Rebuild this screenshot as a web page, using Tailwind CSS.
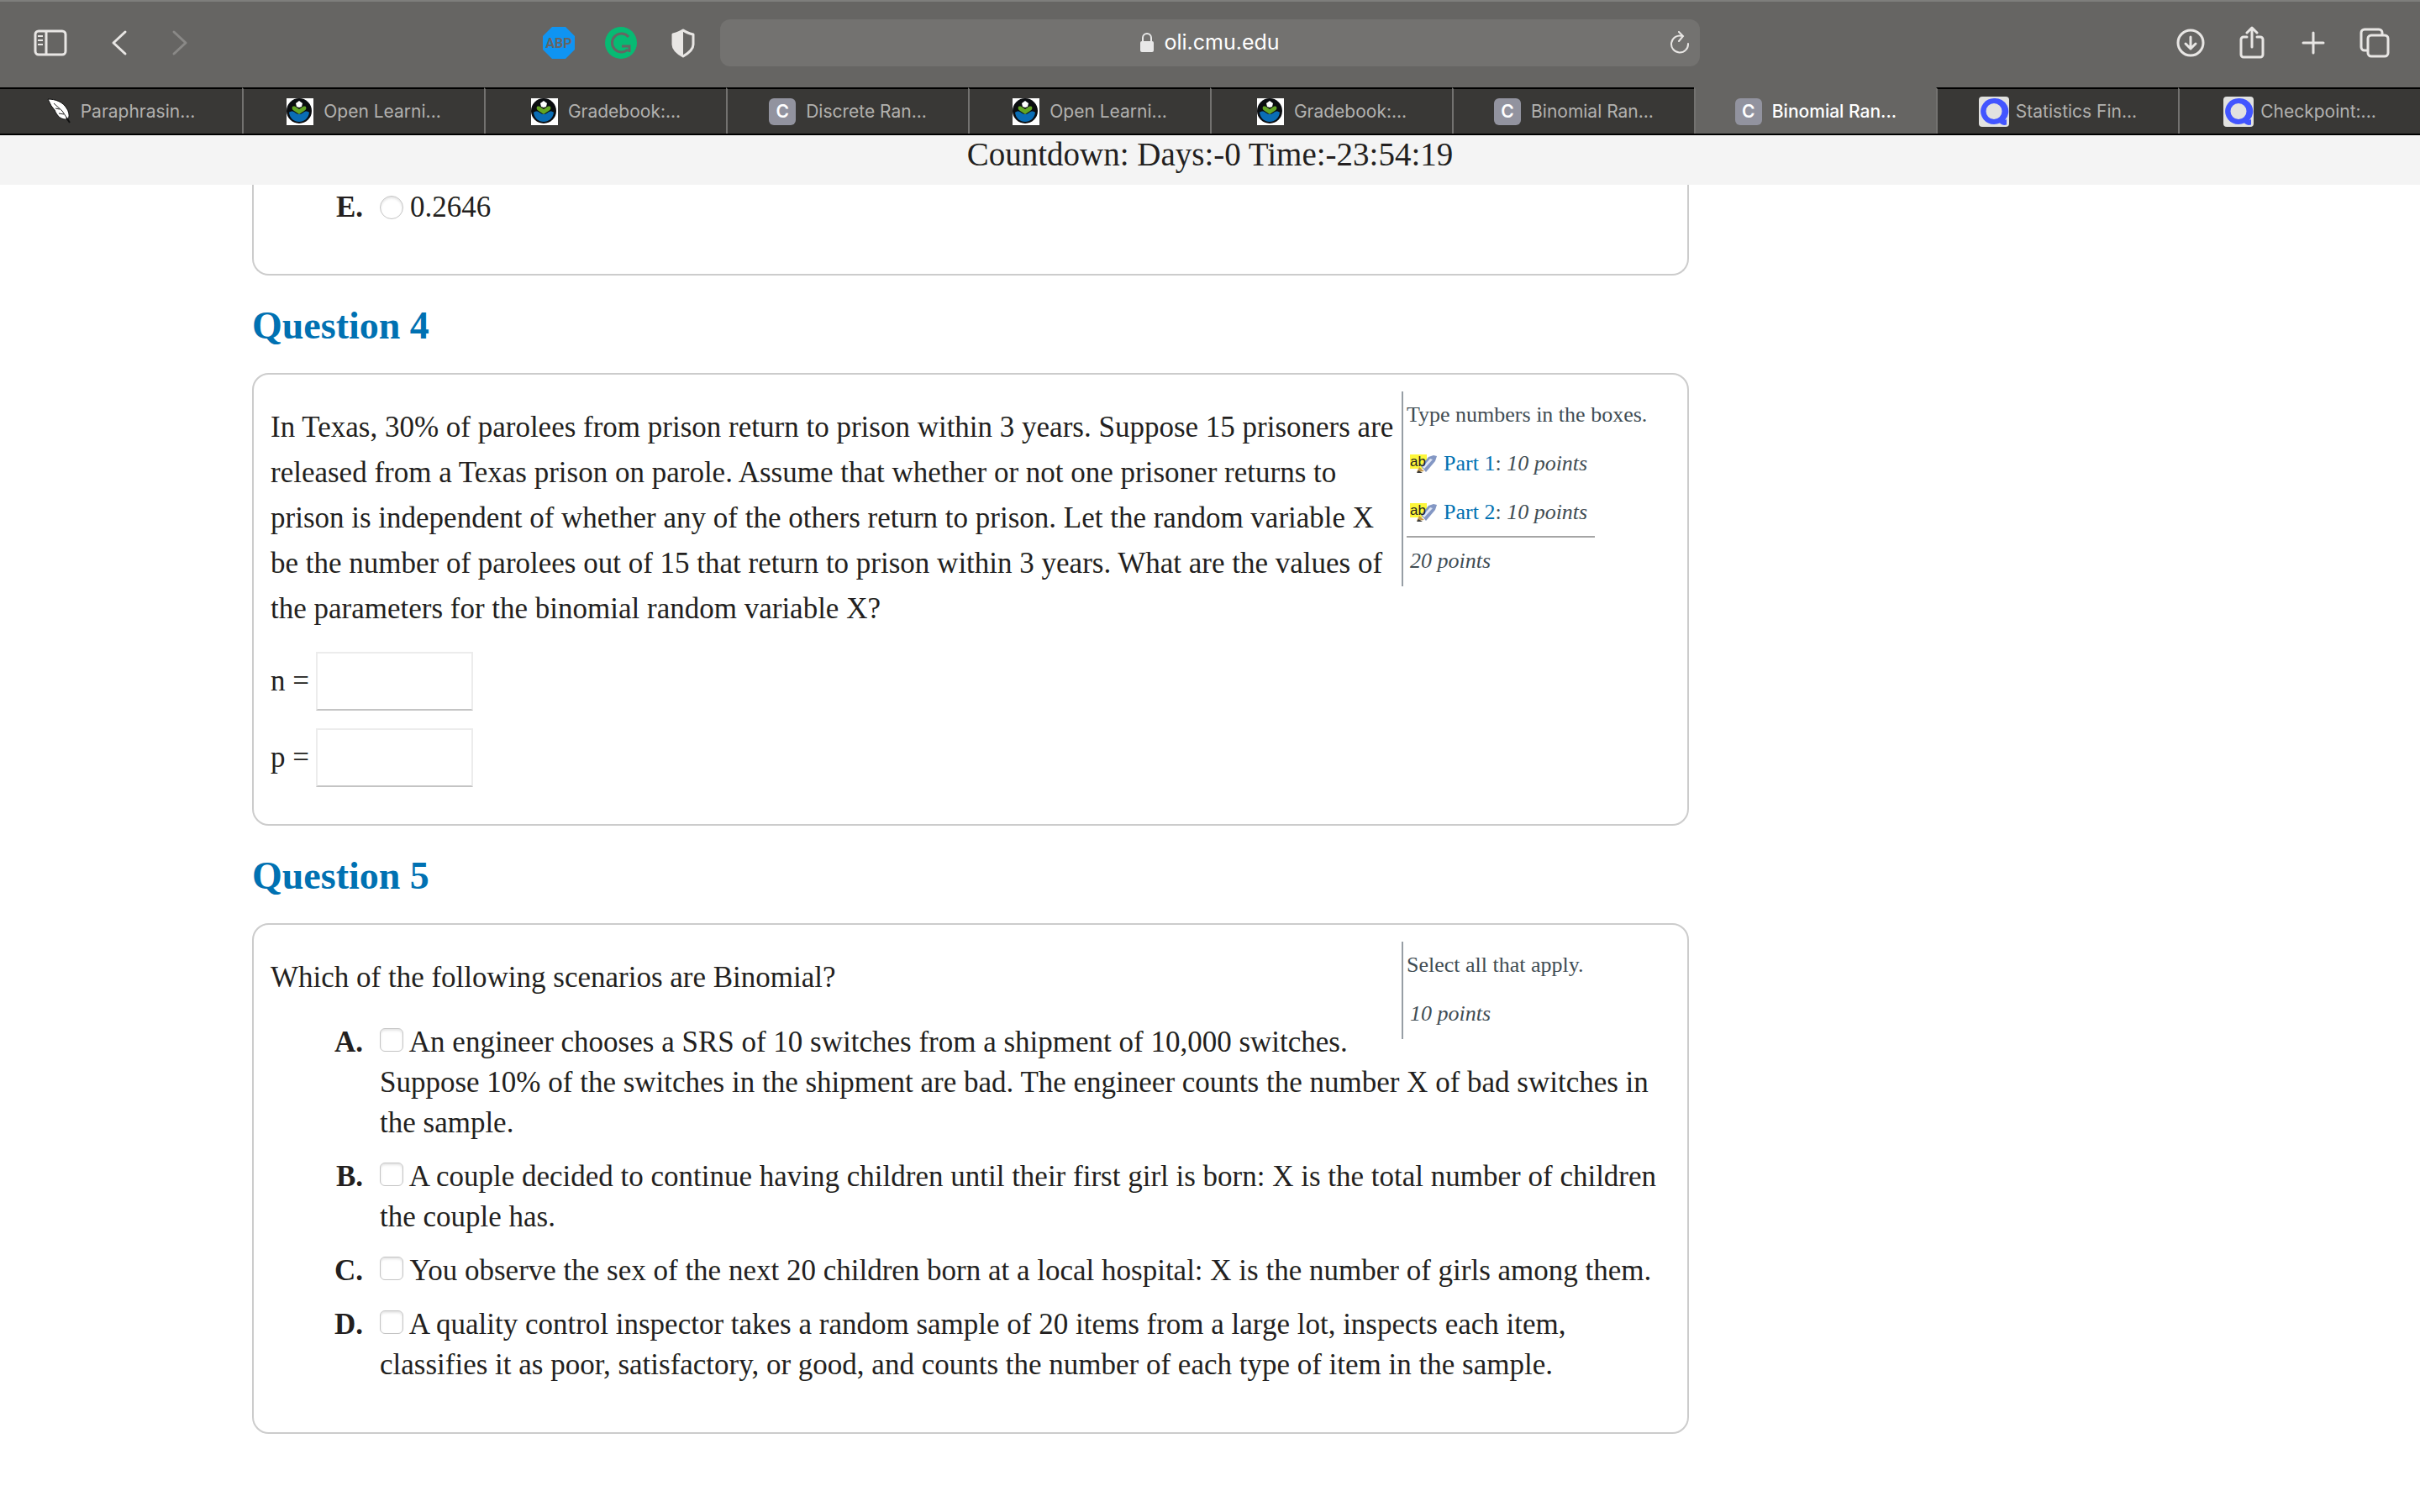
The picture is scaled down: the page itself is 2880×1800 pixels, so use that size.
<!DOCTYPE html>
<html lang="en">

<head>
  <meta charset="UTF-8">
  <meta name="viewport" content="width=device-width, initial-scale=1.0">
  <script src="https://cdn.jsdelivr.net/npm/@tailwindcss/browser@4"></script>
  <title>Binomial Random Variables</title>
</head>

<body class="bg-white min-h-screen overflow-x-hidden text-[#231f20] font-['Liberation_Serif',serif]">

  <!-- icons that are used more than once -->
  <svg class="hidden">
    <symbol id="oli" viewBox="0 0 32 32">
      <path fill="#fff" d="M0 0h32v32H0z" />
      <circle cx="15" cy="15" r="15" fill="#0b0d10" />
      <path fill="#0a6db5" d="M3 17c2-2 5-2 7 0 2 1 3 2 5 2s3-1 5-2c2-2 5-2 7 0-1 7-6 11-12 11S4 24 3 17z" />
      <path fill="#63a524" d="M7 10c2-1 4 0 5 1l3 2 3-2c1-1 3-2 5-1 1 2 0 4-2 5l-6 4-6-4c-2-1-3-3-2-5z" />
      <path fill="#fff" d="m15 3 4 3-1 4-3 1-3-1-1-4z" />
    </symbol>
    <symbol id="quill" viewBox="0 0 36 36">
      <rect width="36" height="36" rx="4" fill="#e2e2e0" />
      <path fill="#4255ff" fill-rule="evenodd" d="M18 2a16 15.500 0 1 0 7 29.500c2 2 5 3 8 2V27l-2 1A16 15.500 0 0 0 18 2zm0 6a9.500 9.500 0 1 1 0 19 9.500 9.500 0 0 1 0-19z" />
    </symbol>
    <symbol id="marker" viewBox="0 0 32 22">
      <path fill="#fdf63a" d="M0 0h20v17H0z" />
      <path fill="#c79a4a" d="m8 21 3-6 6 5z" />
      <path fill="#8397c4" d="m13 14 9-11 6-2 4 1-2 6-11 13z" />
      <path fill="#dfe6f6" d="m15 15 9-10 3 1-10 11z" />
      <path fill="#3a3a3a" d="m8 22 2-3 5 3z" />
      <text x="0" y="14" font-size="17" font-family="Liberation Sans, sans-serif" fill="#222">ab</text>
    </symbol>
  </svg>

  <header class="font-[Inter,sans-serif]">
    <div class="h-26 bg-[#666563] border-t-2 border-[#7e7e7c] flex items-center text-[#e8e6e4] px-9 pb-1">
      <div class="flex-1 flex items-center">
        <button aria-label="Sidebar" class="w-11 ml-1">
          <svg class="w-10 h-8" viewBox="0 0 40 32" fill="none" stroke="currentColor" stroke-width="3">
            <rect x="2" y="2" width="36" height="28" rx="4" />
            <path d="M15 2v28" />
            <path d="M5 8h6M5 13h6M5 18h6" stroke-width="2" />
          </svg>
        </button>
        <button aria-label="Back" class="ml-12">
          <svg class="w-5 h-8" viewBox="0 0 20 32" fill="none" stroke="currentColor" stroke-width="3" stroke-linecap="round" stroke-linejoin="round">
            <path d="M17 3 3 16l14 13" />
          </svg>
        </button>
        <button aria-label="Forward" class="ml-13 text-[#8a8987]">
          <svg class="w-5 h-8" viewBox="0 0 20 32" fill="none" stroke="currentColor" stroke-width="3" stroke-linecap="round" stroke-linejoin="round">
            <path d="m3 3 14 13L3 29" />
          </svg>
        </button>
        <div class="ml-auto flex items-center gap-[34px] mr-6">
          <button aria-label="Adblock Plus">
            <svg class="w-10 h-10" viewBox="0 0 40 40">
              <path fill="#0f94f2" d="M12 1h16l11 11v16L28 39H12L1 28V12z" />
              <text x="20" y="26" text-anchor="middle" font-size="16" font-family="Roboto, sans-serif" font-weight="700" fill="#666563">ABP</text>
            </svg>
          </button>
          <button aria-label="Grammarly">
            <svg class="w-10 h-10" viewBox="0 0 40 40">
              <circle cx="20" cy="20" r="19" fill="#07ba73" />
              <path d="M29 13a11 11 0 1 0-1 15M21 24h9v7" fill="none" stroke="#666563" stroke-width="3" />
            </svg>
          </button>
          <button aria-label="Privacy report">
            <svg class="w-10 h-9" viewBox="0 0 40 36">
              <path fill="none" stroke="currentColor" stroke-width="3" stroke-linejoin="round" d="M20 3c4 3 8 4 12 5v12c0 6-5 10-12 14C13 30 8 26 8 20V8c4-1 8-2 12-5z" />
              <path fill="currentColor" d="M20 3v31C13 30 8 26 8 20V8c4-1 8-2 12-5z" />
            </svg>
          </button>
        </div>
      </div>
      <div class="w-[1166px] h-14 rounded-xl bg-[#737270] flex items-center px-3">
        <div class="flex-1 flex items-center justify-center gap-3 text-[25px] text-white pl-6">
          <svg class="w-4 h-6" viewBox="0 0 16 24">
            <rect y="10" width="16" height="13" rx="2" fill="#e8e8e8" />
            <path d="M3 11V6a5 5 0 0 1 10 0v5" fill="none" stroke="#e8e8e8" stroke-width="2" />
          </svg>
          <span>oli.cmu.edu</span>
        </div>
        <button aria-label="Reload">
          <svg class="w-6 h-7" viewBox="0 0 24 28" fill="none" stroke="currentColor" stroke-width="2" stroke-linecap="round">
            <path d="M15 6a10 10 0 1 0 7 9M11 1l5 5-5 6" />
          </svg>
        </button>
      </div>
      <div class="flex-1 flex items-center justify-end gap-[37px]">
        <button aria-label="Downloads">
          <svg class="w-9 h-9" viewBox="0 0 36 36" fill="none" stroke="currentColor" stroke-width="3" stroke-linecap="round" stroke-linejoin="round">
            <circle cx="18" cy="18" r="15" />
            <path d="M18 11v14M12 19l6 6 6-6" />
          </svg>
        </button>
        <button aria-label="Share">
          <svg class="w-9 h-10" viewBox="0 0 36 40" fill="none" stroke="currentColor" stroke-width="3" stroke-linecap="round" stroke-linejoin="round">
            <path d="M12 13H8a3 3 0 0 0-3 3v18a3 3 0 0 0 3 3h20a3 3 0 0 0 3-3V16a3 3 0 0 0-3-3h-4M18 25V3M12 8l6-6 6 6" />
          </svg>
        </button>
        <button aria-label="New tab">
          <svg class="w-9 h-7" viewBox="0 0 36 28" fill="none" stroke="currentColor" stroke-width="3" stroke-linecap="round">
            <path d="M18 2v24M6 14h24" />
          </svg>
        </button>
        <button aria-label="Tab overview">
          <svg class="w-9 h-9" viewBox="0 0 36 36" fill="none" stroke="currentColor" stroke-width="3">
            <rect x="10" y="9" width="24" height="25" rx="4" />
            <path d="M10 27H6a4 4 0 0 1-4-4V6a4 4 0 0 1 4-4h17a4 4 0 0 1 4 4v3" />
          </svg>
        </button>
      </div>
    </div>

    <!-- tabs -->
    <nav class="h-[57px] bg-[#393836] border-b-2 border-black grid grid-cols-10 text-[21px] text-[#b2b1af]">
      <a href="#" class="border-t-2 border-t-black flex items-center justify-center gap-2">
        <svg class="w-8 h-8" viewBox="0 0 32 32">
          <path fill="#fff" stroke="#111" d="M1 1c9 0 18 3 23 12 2 4 3 8 1 12-9 1-13-4-16-11L5 9z" />
          <path fill="none" stroke="#222" d="m8 6 10 9 6 9M10 12l5 1M14 18l6 1" />
          <path fill="none" stroke="#111" stroke-width="2" d="m23 23 4 6" />
        </svg>
        Paraphrasin...
      </a>
      <a href="#" class="border-t-2 border-t-black border-l-2 border-l-[#737270] flex items-center justify-center gap-3">
        <svg class="w-8 h-8"><use href="#oli" /></svg>
        Open Learni...
      </a>
      <a href="#" class="border-t-2 border-t-black border-l-2 border-l-[#737270] flex items-center justify-center gap-3">
        <svg class="w-8 h-8"><use href="#oli" /></svg>
        Gradebook:...
      </a>
      <a href="#" class="border-t-2 border-t-black border-l-2 border-l-[#737270] flex items-center justify-center gap-3">
        <span class="w-8 h-8 rounded-md bg-[#92939f] text-white font-semibold flex items-center justify-center">C</span>
        Discrete Ran...
      </a>
      <a href="#" class="border-t-2 border-t-black border-l-2 border-l-[#737270] flex items-center justify-center gap-3">
        <svg class="w-8 h-8"><use href="#oli" /></svg>
        Open Learni...
      </a>
      <a href="#" class="border-t-2 border-t-black border-l-2 border-l-[#737270] flex items-center justify-center gap-3">
        <svg class="w-8 h-8"><use href="#oli" /></svg>
        Gradebook:...
      </a>
      <a href="#" class="border-t-2 border-t-black border-l-2 border-l-[#737270] flex items-center justify-center gap-3">
        <span class="w-8 h-8 rounded-md bg-[#92939f] text-white font-semibold flex items-center justify-center">C</span>
        Binomial Ran...
      </a>
      <a href="#" class="bg-[#666563] border-t-2 border-t-[#666563] border-l-2 border-l-[#737270] text-white font-medium flex items-center justify-center gap-3">
        <span class="w-8 h-8 rounded-md bg-[#92939f] text-white font-semibold flex items-center justify-center">C</span>
        Binomial Ran...
      </a>
      <a href="#" class="border-t-2 border-t-black border-l-2 border-l-[#737270] flex items-center justify-center gap-2">
        <svg class="w-9 h-9"><use href="#quill" /></svg>
        Statistics Fin...
      </a>
      <a href="#" class="border-t-2 border-t-black border-l-2 border-l-[#737270] flex items-center justify-center gap-2">
        <svg class="w-9 h-9"><use href="#quill" /></svg>
        Checkpoint:...
      </a>
    </nav>
  </header>

  <div class="h-[59px] bg-[#f4f4f4] text-center text-[39px] leading-[46px]">Countdown: Days:-0 Time:-23:54:19</div>

  <main class="ml-[300px] w-[1710px] max-w-full text-[35px] leading-12">
    <section class="border-2 border-t-0 border-[#cccccc] rounded-b-[20px] px-5 pt-[3px] pb-[55px]">
      <div class="flex">
        <span class="w-[110px] shrink-0 text-right font-bold">E.</span>
        <div class="ml-5 flex items-center">
          <input type="radio" id="q3e" name="q3" class="appearance-none w-7 h-7 rounded-full border border-[#c4c4c4] shadow-[inset_0_2px_3px_#e4e4e4]">
          <label for="q3e" class="ml-2">0.2646</label>
        </div>
      </div>
    </section>

    <h2 class="mt-9 text-[46px] leading-12 text-[#0071b2] font-bold">Question 4</h2>
    <section class="mt-8 border-2 border-[#cccccc] rounded-[20px] p-5 pb-11">
      <div class="flex items-start">
        <p class="flex-1 pt-4 leading-[54px] whitespace-nowrap">
          In Texas, 30% of parolees from prison return to prison within 3 years. Suppose 15 prisoners are<br>
          released from a Texas prison on parole. Assume that whether or not one prisoner returns to<br>
          prison is independent of whether any of the others return to prison. Let the random variable X<br>
          be the number of parolees out of 15 that return to prison within 3 years. What are the values of<br>
          the parameters for the binomial random variable X?
        </p>
        <aside class="w-[320px] shrink-0 h-[232px] border-l-2 border-[#979ea5] pl-1 pt-2 text-[26px] leading-10 text-[#414d54]">
          <p>Type numbers in the boxes.</p>
          <div class="mt-[18px] pl-1 flex items-center gap-2">
            <svg class="w-8 h-6"><use href="#marker" /></svg>
            <p><a href="#" class="text-[#0071b2]">Part 1</a>: <i>10 points</i></p>
          </div>
          <div class="mt-[18px] pl-1 flex items-center gap-2">
            <svg class="w-8 h-6"><use href="#marker" /></svg>
            <p><a href="#" class="text-[#0071b2]">Part 2</a>: <i>10 points</i></p>
          </div>
          <hr class="mt-2 w-56 border-t-2 border-[#a5a5a5]">
          <p class="mt-2 pl-1 italic">20 points</p>
        </aside>
      </div>
      <div class="mt-6 flex items-center">
        <label for="n" class="w-[54px]">n =</label>
        <input type="text" id="n" class="w-[187px] h-[70px] px-3 border-2 border-[#ececec] border-b-[#c4c4c4]">
      </div>
      <div class="mt-[21px] flex items-center">
        <label for="p" class="w-[54px]">p =</label>
        <input type="text" id="p" class="w-[187px] h-[70px] px-3 border-2 border-[#ececec] border-b-[#c4c4c4]">
      </div>
    </section>

    <h2 class="mt-9 text-[46px] leading-12 text-[#0071b2] font-bold">Question 5</h2>
    <section class="mt-8 border-2 border-[#cccccc] rounded-[20px] p-5 pb-14">
      <div class="flex items-start">
        <p class="flex-1 pt-4 leading-[54px]">Which of the following scenarios are Binomial?</p>
        <aside class="w-[320px] shrink-0 h-29 -mb-5 border-l-2 border-[#979ea5] pl-1 pt-2 text-[26px] leading-10 text-[#414d54]">
          <p>Select all that apply.</p>
          <p class="mt-[18px] pl-1 italic">10 points</p>
        </aside>
      </div>
      <ol class="flex flex-col gap-4">
        <li class="flex">
          <span class="w-[110px] shrink-0 text-right font-bold">A.</span>
          <div class="ml-5 whitespace-nowrap">
            <input type="checkbox" id="q5a" class="appearance-none w-7 h-7 rounded-md border border-[#c4c4c4] shadow-[inset_0_2px_3px_#e4e4e4]">
            <label for="q5a">An engineer chooses a SRS of 10 switches from a shipment of 10,000 switches.<br>Suppose 10% of the switches in the shipment are bad. The engineer counts the number X of bad switches in<br>the sample.</label>
          </div>
        </li>
        <li class="flex">
          <span class="w-[110px] shrink-0 text-right font-bold">B.</span>
          <div class="ml-5 whitespace-nowrap">
            <input type="checkbox" id="q5b" class="appearance-none w-7 h-7 rounded-md border border-[#c4c4c4] shadow-[inset_0_2px_3px_#e4e4e4]">
            <label for="q5b">A couple decided to continue having children until their first girl is born: X is the total number of children<br>the couple has.</label>
          </div>
        </li>
        <li class="flex">
          <span class="w-[110px] shrink-0 text-right font-bold">C.</span>
          <div class="ml-5 whitespace-nowrap">
            <input type="checkbox" id="q5c" class="appearance-none w-7 h-7 rounded-md border border-[#c4c4c4] shadow-[inset_0_2px_3px_#e4e4e4]">
            <label for="q5c">You observe the sex of the next 20 children born at a local hospital: X is the number of girls among them.</label>
          </div>
        </li>
        <li class="flex">
          <span class="w-[110px] shrink-0 text-right font-bold">D.</span>
          <div class="ml-5 whitespace-nowrap">
            <input type="checkbox" id="q5d" class="appearance-none w-7 h-7 rounded-md border border-[#c4c4c4] shadow-[inset_0_2px_3px_#e4e4e4]">
            <label for="q5d">A quality control inspector takes a random sample of 20 items from a large lot, inspects each item,<br>classifies it as poor, satisfactory, or good, and counts the number of each type of item in the sample.</label>
          </div>
        </li>
      </ol>
    </section>
  </main>
</body>

</html>
